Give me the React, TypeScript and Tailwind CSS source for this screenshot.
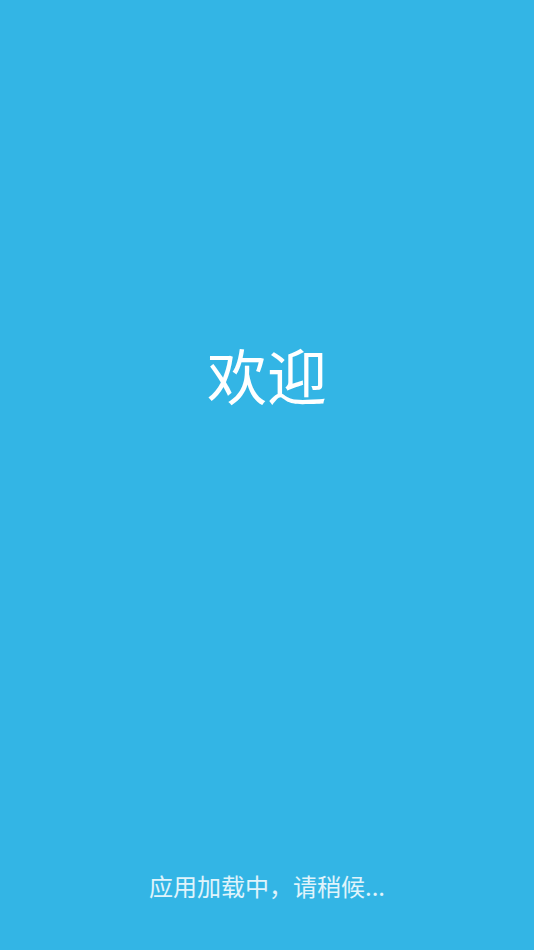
import React from "react";

const App = () => {
  return (
    <div
      className="flex flex-col items-center h-[950px] w-full bg-[#33b5e5] text-white"
      style={{ fontFamily: '"Noto Sans CJK SC", "Noto Sans", sans-serif' }}
    >
      <div className="pt-[330px] text-[60px] leading-[88px]">欢迎</div>
      <div className="flex-1" />
      <div className="pb-[47px] text-[24px] leading-[34px] text-white/85">应用加载中，请稍候...</div>
    </div>
  );
};

export default App;
